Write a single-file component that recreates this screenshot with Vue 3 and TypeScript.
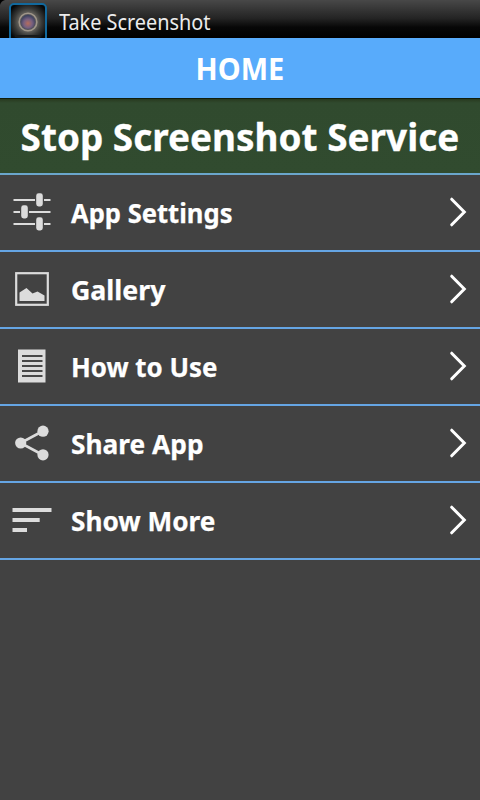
<script setup lang="ts">
interface MenuItem {
  id: string
  label: string
}

const items: MenuItem[] = [
  { id: 'settings', label: 'App Settings' },
  { id: 'gallery', label: 'Gallery' },
  { id: 'help', label: 'How to Use' },
  { id: 'share', label: 'Share App' },
  { id: 'more', label: 'Show More' },
]
</script>

<template>
  <main class="screen">
    <div class="titlebar">
      <svg class="app-icon" width="60" height="38" viewBox="0 0 60 38">
        <defs>
          <radialGradient id="glow" gradientUnits="userSpaceOnUse" cx="28" cy="22" r="21">
            <stop offset="0.35" stop-color="#77736c" />
            <stop offset="0.65" stop-color="#393a38" />
            <stop offset="1" stop-color="#050708" />
          </radialGradient>
          <radialGradient id="lens" cx="0.5" cy="0.6" r="0.6">
            <stop offset="0" stop-color="#b56c5c" />
            <stop offset="0.5" stop-color="#79617f" />
            <stop offset="1" stop-color="#343d5c" />
          </radialGradient>
        </defs>
        <path d="M0 0H5Q1 1 0 5Z" fill="#000" />
        <rect x="10" y="4" width="36" height="42" rx="4" fill="url(#glow)" stroke="#12699d" stroke-width="2" />
        <circle cx="28" cy="22" r="8.8" fill="#55535a" stroke="#a0978a" stroke-width="1.6" />
        <circle cx="28" cy="22" r="7" fill="url(#lens)" />
        <path d="M15 36H41" stroke="#171a1b" stroke-width="2" />
      </svg>
      <span class="title">Take Screenshot</span>
    </div>
    <header class="header"><span>HOME</span></header>
    <button class="service"><span>Stop Screenshot Service</span></button>
    <nav>
      <button v-for="item in items" :key="item.id" class="row">
        <svg class="icon" width="64" height="75" viewBox="0 0 64 75">
          <g v-if="item.id === 'settings'" fill="#dcdcdc">
            <path d="M13.5 24H35V26H13.5ZM44 24H50.5V26H44ZM13.5 36H20V38H13.5ZM29 36H50.5V38H29ZM13.5 48H35V50H13.5ZM44 48H50.5V50H44Z" />
            <rect x="36.2" y="18.3" width="6.6" height="13.2" rx="2.4" />
            <rect x="21.2" y="30.3" width="6.6" height="13.2" rx="2.4" />
            <rect x="36.2" y="42.3" width="6.6" height="13.2" rx="2.4" />
          </g>
          <g v-else-if="item.id === 'gallery'">
            <rect x="16.2" y="21.2" width="31.6" height="31.6" fill="none" stroke="#dcdcdc" stroke-width="2.2" />
            <path d="M19.5 49V40.5L26.5 36L32.5 41.5L37.5 39.5L44.5 43.5V49Z" fill="#dcdcdc" />
          </g>
          <g v-else-if="item.id === 'help'">
            <rect x="18" y="20.5" width="27.5" height="33" fill="#dcdcdc" />
            <path d="M22 27H42.5M22 32H42.5M22 37H42.5M22 42H42.5M22 47H42.5" stroke="#484848" stroke-width="1.8" />
          </g>
          <g v-else-if="item.id === 'share'" fill="#dcdcdc">
            <path d="M43 25L20.5 37L43 49" fill="none" stroke="#dcdcdc" stroke-width="2.6" />
            <circle cx="43" cy="25.2" r="5.6" />
            <circle cx="20.7" cy="37" r="5.6" />
            <circle cx="43" cy="48.8" r="5.6" />
          </g>
          <path v-else d="M12.5 25H51.5V29H12.5ZM12.5 35H39.7V39H12.5ZM12.5 45H27V49H12.5Z" fill="#dcdcdc" />
        </svg>
        <span :class="['label', item.id]">{{ item.label }}</span>
        <svg class="chevron" width="20" height="32" viewBox="0 0 20 32">
          <path d="M3.7 2.2L16.3 15L3.7 27.8" fill="none" stroke="#fff" stroke-width="3" stroke-linecap="round" />
        </svg>
      </button>
    </nav>
  </main>
</template>

<style>
body {
  background: #424242;
}
</style>

<style scoped>
.screen {
  height: 800px;
  overflow: hidden;
  background: #424242;
  color: #fff;
  font-family: 'Noto Sans', 'Open Sans', sans-serif;
}
button {
  width: 100%;
  padding: 0;
  border: 0;
  background: none;
  color: inherit;
  font: inherit;
  text-align: left;
}
span {
  white-space: nowrap;
}
.titlebar {
  display: flex;
  height: 38px;
  background: linear-gradient(#484848, #242424 48%, #070707 72%, #000);
}
.title {
  margin-left: -1px;
  padding-top: 5px;
  font-size: 22px;
  line-height: 32px;
  color: #ececec;
  transform: scaleX(0.903);
  transform-origin: left;
}
.header {
  display: flex;
  justify-content: center;
  height: 60px;
  background: #58abfb;
  font-size: 30px;
  font-weight: 700;
  line-height: 62px;
}
.header span {
  transform: scaleX(0.967);
}
.service {
  display: flex;
  justify-content: center;
  box-sizing: border-box;
  height: 77px;
  border-bottom: 2px solid #6ba6cc;
  background: linear-gradient(#101e0e 1px, #28391f 1px, #304a2e 5px, #314b2f);
  font-size: 38px;
  font-weight: 700;
  line-height: 76px;
}
.service span {
  transform: scaleX(0.971);
  -webkit-text-stroke: 0.3px #fff;
}
.row {
  display: flex;
  align-items: center;
  box-sizing: border-box;
  height: 77px;
  border-bottom: 2px solid #65a5e4;
}
.icon,
.chevron {
  flex: none;
}
.label {
  margin-left: 7px;
  font-size: 27px;
  font-weight: 700;
  line-height: 75px;
  transform-origin: left;
  -webkit-text-stroke: 0.25px #fff;
}
.settings {
  transform: scaleX(0.947);
}
.gallery {
  transform: scaleX(0.99);
}
.help {
  transform: scaleX(0.959);
}
.share {
  transform: scaleX(0.974);
}
.more {
  transform: scaleX(0.97);
}
.chevron {
  margin-left: auto;
  margin-right: 12px;
}
</style>
